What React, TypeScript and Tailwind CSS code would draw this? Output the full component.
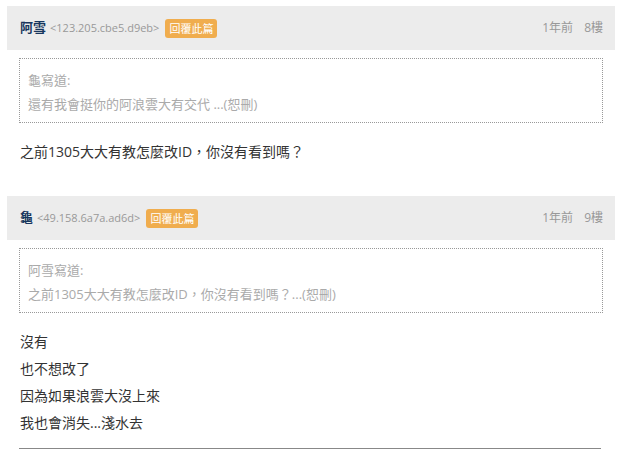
import React from 'react';

const posts = [
  {
    name: '阿雪',
    ip: '<123.205.cbe5.d9eb>',
    time: '1年前',
    floor: '8樓',
    quoteFrom: '龜寫道:',
    quote: '還有我會挺你的阿浪雲大有交代 ...(恕刪)',
    lines: ['之前1305大大有教怎麼改ID，你沒有看到嗎？'],
  },
  {
    name: '龜',
    ip: '<49.158.6a7a.ad6d>',
    time: '1年前',
    floor: '9樓',
    quoteFrom: '阿雪寫道:',
    quote: '之前1305大大有教怎麼改ID，你沒有看到嗎？...(恕刪)',
    lines: ['沒有', '也不想改了', '因為如果浪雲大沒上來', '我也會消失...淺水去'],
  },
];

export default function App() {
  return (
    <div
      className="w-[623px] h-[449px] overflow-hidden bg-white pt-[6px] pl-[7px] pr-[8px]"
      style={{ fontFamily: '"Open Sans", "Noto Sans CJK TC", sans-serif' }}
    >
      {posts.map((post, index) => (
        <div key={index} className={index === 0 ? '' : 'mt-[31px]'}>
          <div className="h-[44px] bg-[#ececec] flex items-center pl-[13px] pr-[12px]">
            <span className="text-[13px] font-bold text-[#17365d]">{post.name}</span>
            <span className="ml-[4px] text-[11px] text-[#999]">{post.ip}</span>
            <span className="ml-[6px] h-[19px] px-[4px] rounded-[3px] bg-[#f0ad4e] text-white text-[11px] leading-[19px]">
              回覆此篇
            </span>
            <span className="ml-auto text-[12px] text-[#999]">{post.time}</span>
            <span className="ml-[11px] text-[12px] text-[#999]">{post.floor}</span>
          </div>
          <div className="mt-[8px] ml-[12px] mr-[12px] border border-dotted border-[#999] px-[8px] pt-[9px] pb-[6px] text-[13px] text-[#aaa] leading-[24px]">
            <div>{post.quoteFrom}</div>
            <div>{post.quote}</div>
          </div>
          <div className="ml-[13px] mt-[15px] text-[14px] text-[#333]">
            {post.lines.map((line, i) => (
              <div key={i} className="leading-[27px]">
                {line}
              </div>
            ))}
          </div>
        </div>
      ))}
      <div className="ml-[12px] mr-[14px] mt-[12px] border-t-2 border-[#888]" />
    </div>
  );
}
